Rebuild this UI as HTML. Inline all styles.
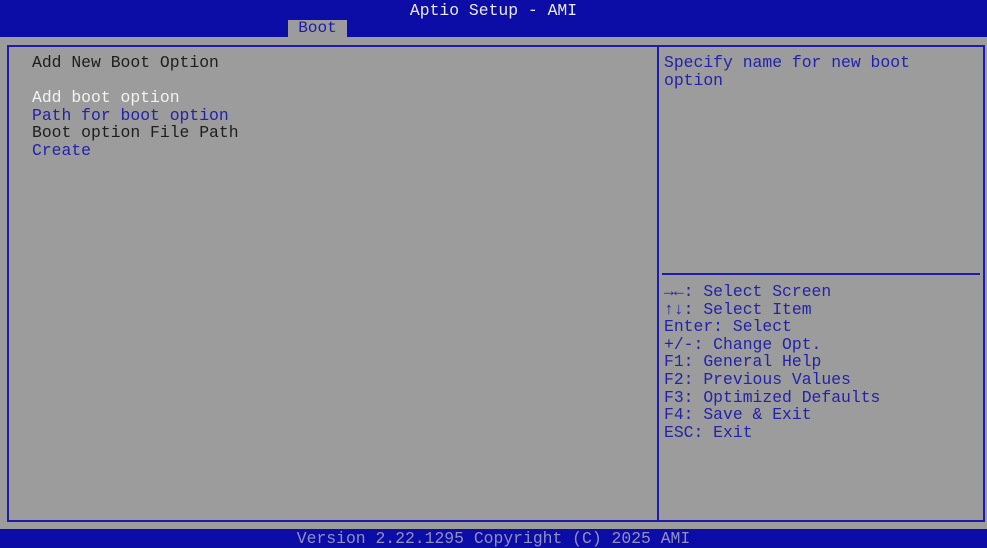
<!DOCTYPE html>
<html><head><meta charset="utf-8"><style>
body{margin:0;width:987px;height:548px;background:#9c9c9c;position:relative;overflow:hidden;font-family:"Liberation Mono","DejaVu Sans Mono",monospace;font-size:16.4px;}
.t{position:absolute;white-space:pre;line-height:17.6px;}
#top{position:absolute;left:0;top:0;width:987px;height:37px;background:#0c0ca6;}
#tab{position:absolute;left:288px;top:20px;width:59px;height:17px;background:#9c9c9c;color:#1c1ca8;font-size:16px;line-height:17px;text-align:center;}
#box{position:absolute;left:7px;top:45px;width:974px;height:473px;border:2px solid #1c1ca8;}
#div{position:absolute;left:657px;top:45px;width:2px;height:477px;background:#1c1ca8;}
#sep{position:absolute;left:662px;top:273px;width:318px;height:2px;background:#1c1ca8;}
#bot{position:absolute;left:0;top:529px;width:987px;height:19px;background:#0c0ca6;color:#9090c0;text-align:center;font-size:16.4px;line-height:19px;}
.b{color:#2222aa}.w{color:#f2f2f2}.k{color:#1e1e1e}
</style></head><body>
<div id="top"><div class="t" style="left:0;width:987px;text-align:center;top:2px;color:#e8e8e8;font-size:16.4px">Aptio Setup - AMI</div><div id="tab">Boot</div></div>
<div id="box"></div><div id="div"></div><div id="sep"></div>
<div class="t k" style="left:32px;top:54px">Add New Boot Option</div>
<div class="t" style="left:32px;top:89px"><span class="w">Add boot option</span>
<span class="b">Path for boot option</span>
<span class="k">Boot option File Path</span>
<span class="b">Create</span></div>
<div class="t b" style="left:664px;top:54px">Specify name for new boot
option</div>
<div class="t b" style="left:664px;top:283px">→←: Select Screen
↑↓: Select Item
Enter: Select
+/-: Change Opt.
F1: General Help
F2: Previous Values
F3: Optimized Defaults
F4: Save &amp; Exit
ESC: Exit</div>
<div id="bot">Version 2.22.1295 Copyright (C) 2025 AMI</div>
</body></html>
